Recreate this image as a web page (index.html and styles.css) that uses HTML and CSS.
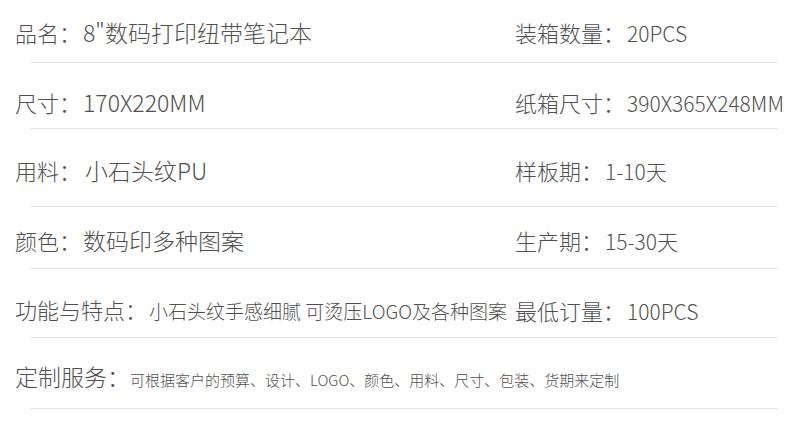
FILE: index.html
```html
<!DOCTYPE html>
<html lang="zh-CN">
<head>
    <meta charset="UTF-8">
    <meta name="viewport" content="width=device-width, initial-scale=1.0">
    <title>数码打印纽带笔记本</title>
    <link rel="stylesheet" href="styles.css">
</head>
<body>
    <div class="specs">
        <div class="row r1">
            <div class="cell main"><span class="label">品名：</span>8"数码打印纽带笔记本</div>
            <div class="cell"><span class="label">装箱数量：</span>20PCS</div>
        </div>
        <div class="rule"></div>

        <div class="row r2">
            <div class="cell main"><span class="label">尺寸：</span>170X220MM</div>
            <div class="cell"><span class="label">纸箱尺寸：</span>390X365X248MM</div>
        </div>
        <div class="rule"></div>

        <div class="row r3">
            <div class="cell main"><span class="label">用料：</span><span class="gap"></span>小石头纹PU</div>
            <div class="cell"><span class="label">样板期：</span>1-10天</div>
        </div>
        <div class="rule"></div>

        <div class="row r4">
            <div class="cell main"><span class="label">颜色：</span>数码印多种图案</div>
            <div class="cell"><span class="label">生产期：</span>15-30天</div>
        </div>
        <div class="rule"></div>

        <div class="row r5">
            <div class="cell main"><span class="label">功能与特点：</span><span class="small">小石头纹手感细腻 可烫压LOGO及各种图案</span></div>
            <div class="cell"><span class="label">最低订量：</span>100PCS</div>
        </div>
        <div class="rule"></div>

        <div class="row r6">
            <div class="cell"><span class="label big">定制服务：</span><span class="tiny">可根据客户的预算、设计、LOGO、颜色、用料、尺寸、包装、货期来定制</span></div>
        </div>
        <div class="rule"></div>
    </div>
</body>
</html>
```

FILE: styles.css
```css
body {
    margin: 0;
    background: #fff;
    font-family: "Noto Sans CJK SC", "Noto Sans", sans-serif;
    font-weight: 300;
    color: #505050;
}
.specs {
    width: 790px;
}
.row {
    display: flex;
    align-items: center;
    padding-left: 15px;
    height: 30px;
    line-height: 30px;
    font-size: 23px;
    white-space: nowrap;
}
.cell.main {
    width: 500px;
    flex-shrink: 0;
}
.cell + .cell {
    font-size: 21px;
}
.label {
    font-size: 22px;
    margin-right: 2px;
}
.label.big {
    font-size: 23px;
    margin-right: 0;
}
.gap {
    display: inline-block;
    width: 2px;
}
.small {
    font-size: 19px;
}
.tiny {
    font-size: 15px;
}
.rule {
    height: 1px;
    margin: 0 12px 0 30px;
    background: #e4e4e4;
}
.r1 { padding-top: 17px; padding-bottom: 15px; }
.r2 { padding-top: 24px; padding-bottom: 11px; }
.r3 { padding-top: 26px; padding-bottom: 21px; }
.r4 { padding-top: 18px; padding-bottom: 13px; }
.r5 { padding-top: 26px; padding-bottom: 12px; }
.r6 { padding-top: 25px; padding-bottom: 15px; }
```
